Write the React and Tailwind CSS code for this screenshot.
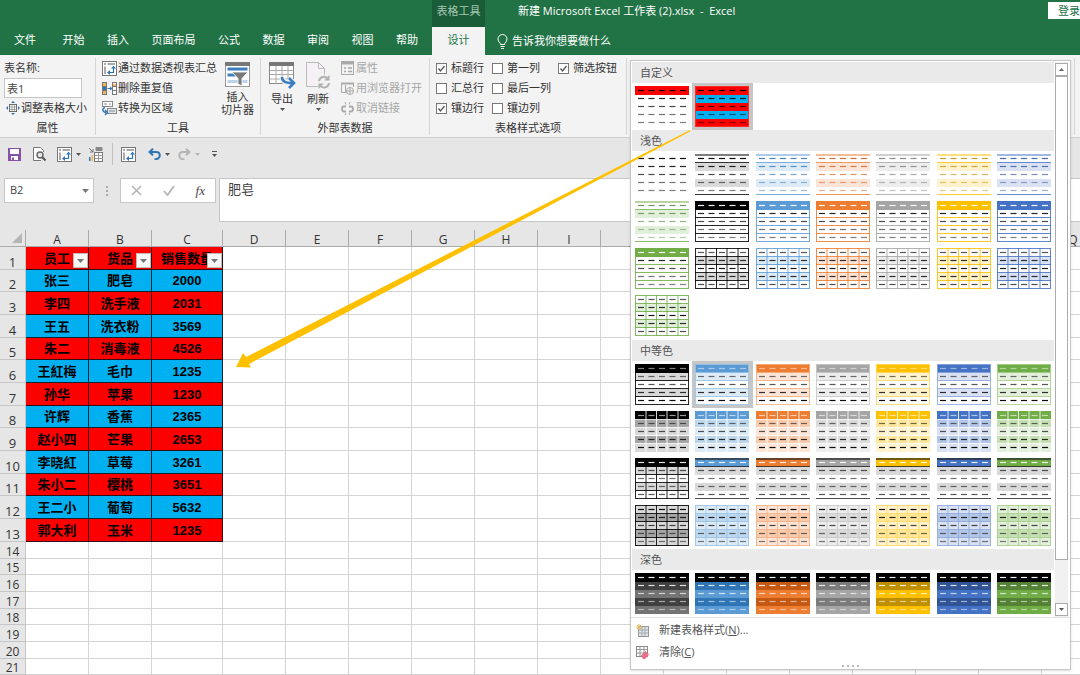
import React, { useState } from 'react';

const columns = ['A', 'B', 'C', 'D', 'E', 'F', 'G', 'H', 'I', 'J', 'K', 'L', 'M', 'N', 'O', 'P', 'Q'];

const records = [
  ['员工', '货品', '销售数量'],
  ['张三', '肥皂', '2000'],
  ['李四', '洗手液', '2031'],
  ['王五', '洗衣粉', '3569'],
  ['朱二', '消毒液', '4526'],
  ['王紅梅', '毛巾', '1235'],
  ['孙华', '苹果', '1230'],
  ['许辉', '香蕉', '2365'],
  ['赵小四', '芒果', '2653'],
  ['李晓紅', '草莓', '3261'],
  ['朱小二', '樱桃', '3651'],
  ['王二小', '葡萄', '5632'],
  ['郭大利', '玉米', '1235'],
];

const emptyRows = [14, 15, 16, 17, 18, 19, 20, 21];

const tabs = ['开始', '插入', '页面布局', '公式', '数据', '审阅', '视图', '帮助'];

// base, tint (20%), mid (40%), line (60%), dark, dash
const themes = {
  black: { base: '#000000', tint: '#d9d9d9', mid: '#a6a6a6', line: '#000000', dark: '#404040', alt: '#737373', dash: '#000000' },
  blue: { base: '#5b9bd5', tint: '#ddebf7', mid: '#bdd7ee', line: '#9bc2e6', dark: '#2f75b5', alt: '#5b9bd5', dash: '#3f7fbb' },
  orange: { base: '#ed7d31', tint: '#fce4d6', mid: '#f8cbad', line: '#f4b084', dark: '#c65911', alt: '#ed7d31', dash: '#d0662a' },
  gray: { base: '#a5a5a5', tint: '#ededed', mid: '#dbdbdb', line: '#c9c9c9', dark: '#7b7b7b', alt: '#a5a5a5', dash: '#858585' },
  gold: { base: '#ffc000', tint: '#fff2cc', mid: '#ffe699', line: '#ffd966', dark: '#bf8f00', alt: '#ffc000', dash: '#c79a1c' },
  indigo: { base: '#4472c4', tint: '#d9e1f2', mid: '#b4c6e7', line: '#8ea9db', dark: '#305496', alt: '#4472c4', dash: '#3c62a8' },
  green: { base: '#70ad47', tint: '#e2efda', mid: '#c6e0b4', line: '#a9d08e', dark: '#548235', alt: '#70ad47', dash: '#6b9150' },
};

const order = ['black', 'blue', 'orange', 'gray', 'gold', 'indigo', 'green'];

const W = '#ffffff';

const variants = {
  plain: () => ({ fills: [W, W, W, W, W], dashes: '#000000', fade: 'down' }),
  customRed: () => ({ fills: ['#ff0000', W, W, W, W], dashes: '#000000', fade: 'down' }),
  customBanded: () => ({ fills: ['#ff0000', '#00b0f0', '#ff0000', '#00b0f0', '#ff0000'], outer: '#ff3030', dashes: '#000000', fade: 'down' }),
  lightLines: (c) => ({ fills: [W, c.tint, W, c.tint, W], rules: c.base, dashes: c.dash, fade: 'down' }),
  lightHeader: (c) => ({ fills: [c.base, W, W, W, W], outer: c.base, rows: c.base, headDash: W, dashes: '#000000', fade: 'down' }),
  lightGrid: (c) => ({ fills: [W, c.tint, W, c.tint, W], outer: c.base, rows: c.base, cols: c.base, dashes: '#000000', fade: 'none' }),
  mediumRows: (c) => ({ fills: [c.base, c.tint, W, c.tint, W], outer: c.line, rows: c.line, headDash: c.tint, dashes: '#000000', fade: 'up' }),
  mediumCells: (c) => ({ fills: [c.base, c.mid, c.tint, c.mid, c.tint], rows: W, cols: W, headDash: W, dashes: '#000000', fade: 'up' }),
  mediumBars: (c) =>
    c.base === '#000000'
      ? { fills: ['#000000', '#d9d9d9', W, '#d9d9d9', W], outer: '#000000', rows: '#000000', cols: '#000000', headDash: W, dashes: '#000000', fade: 'mid' }
      : { fills: [c.base, '#d9d9d9', W, '#d9d9d9', W], rules: '#222222', headDash: W, dashes: '#000000', fade: 'mid' },
  mediumGrid: (c) => ({ fills: [c.tint, c.mid, c.tint, c.mid, c.tint], outer: c.line, rows: c.line, cols: c.line, dashes: '#000000', fade: 'down' }),
  dark: (c) => ({ fills: ['#000000', c.dark, c.alt, c.dark, c.alt], headDash: W, dashes: W, fade: 'down' }),
};

const fades = {
  down: [0.95, 0.85, 0.7, 0.55, 0.5],
  up: [0.6, 0.55, 0.65, 0.8, 0.95],
  mid: [0.9, 0.65, 0.55, 0.55, 0.65],
  none: [0.65, 0.8, 0.9, 0.8, 0.7],
};

const rowY = [0, 9, 17, 25, 33, 41];
const colX = [11, 21.5, 32, 43];
const dashX = [3, 13.5, 24, 34.5, 45];

const Swatch = ({ variant, theme }) => {
  const s = variants[variant](themes[theme] || themes.black);
  return (
    <svg viewBox="0 0 54 41" className="block h-[41px] w-[54px]" aria-hidden="true">
      {s.fills.map((fill, i) => (
        <rect key={i} x="0" y={rowY[i]} width="54" height={rowY[i + 1] - rowY[i]} fill={fill} />
      ))}
      {s.rows && [9, 17, 25, 33].map((y) => <path key={y} d={`M0 ${y - 0.5}H54`} stroke={s.rows} opacity="0.85" />)}
      {s.cols && colX.map((x) => <path key={x} d={`M${x} 0V41`} stroke={s.cols} opacity="0.85" />)}
      {s.rules && (
        <>
          <path d="M0 1H54" stroke={s.rules} strokeWidth="2" opacity={variant === 'lightLines' ? 0.5 : 0.65} />
          <path d="M0 8.5H54M0 40.5H54" stroke={s.rules} opacity="0.8" />
        </>
      )}
      {s.outer && <rect x="0.5" y="0.5" width="53" height="40" fill="none" stroke={s.outer} opacity="0.85" />}
      {dashX.map((x) =>
        rowY.slice(0, 5).map((y, i) => (
          <path
            key={`${x}-${y}`}
            d={`M${x} ${i === 0 ? 4.5 : y + 3.5}h6`}
            stroke={i === 0 && s.headDash ? s.headDash : s.dashes}
            strokeWidth="1.2"
            opacity={fades[s.fade][i]}
          />
        ))
      )}
    </svg>
  );
};

const GallerySection = ({ title, items, selected, onSelect }) => (
  <section>
    <h3 className="h-[21px] bg-[#eaeaea] pl-2 text-[11px] leading-[21px] text-[#555]">{title}</h3>
    <div className="grid grid-cols-7">
      {items.map((item) => (
        <button
          key={item.id}
          type="button"
          aria-label={`${title} ${item.id}`}
          onClick={() => onSelect(item.id)}
          className={
            selected.includes(item.id)
              ? 'flex h-[47px] items-center justify-center bg-[#c6c6c6]'
              : 'flex h-[47px] items-center justify-center'
          }
        >
          <Swatch variant={item.variant} theme={item.theme} />
        </button>
      ))}
    </div>
  </section>
);

const build = (names) => names.flatMap((variant) => order.map((theme) => ({ id: `${variant}-${theme}`, variant, theme })));

const customStyles = [
  { id: 'custom-1', variant: 'customRed' },
  { id: 'custom-2', variant: 'customBanded' },
];
const lightStyles = [{ id: 'none', variant: 'plain' }, ...build(['lightLines', 'lightHeader', 'lightGrid'])];
const mediumStyles = build(['mediumRows', 'mediumCells', 'mediumBars', 'mediumGrid']);
const darkStyles = build(['dark']);

const Caret = ({ className = 'text-[#555]' }) => (
  <svg viewBox="0 0 5 3" className={`h-[3px] w-[5px] shrink-0 ${className}`} aria-hidden="true">
    <path d="M0 0h5L2.5 3z" fill="currentColor" />
  </svg>
);

const PivotIcon = () => (
  <svg viewBox="0 0 15 15" className="h-[15px] w-[15px] shrink-0" fill="none" aria-hidden="true">
    <rect x="0.5" y="0.5" width="14" height="14" fill="#fff" stroke="#777" />
    <path d="M2 3h2M5.5 3H13M3 5.5V13" stroke="#aaa" strokeWidth="2" />
    <path d="M7 11.5h4.5V6.5" stroke="#2e75b6" strokeWidth="1.2" />
    <path d="M9 7.6l2.5-2.8L14 7.6zM8 9l-3 2.5L8 14z" fill="#2e75b6" />
  </svg>
);

const DedupeIcon = () => (
  <svg viewBox="0 0 15 13" className="h-[13px] w-[15px] shrink-0" fill="none" aria-hidden="true">
    <rect x="0.5" y="0.5" width="4" height="12" fill="#f0b35a" stroke="#777" />
    <path d="M1 4.5h3M1 8.5h3" stroke="#777" />
    <rect x="1" y="5" width="3" height="3" fill="#2e75b6" />
    <rect x="10.5" y="0.5" width="4" height="12" fill="#fff" stroke="#777" />
    <path d="M11 2h3v2h-3z" fill="#f0b35a" />
    <path d="M11 4.5h3M11 8.5h3" stroke="#777" />
    <path d="M5.5 6.5h4M8 5l2 1.5L8 8" stroke="#2e75b6" />
  </svg>
);

const RangeIcon = () => (
  <svg viewBox="0 0 15 15" className="h-[15px] w-[15px] shrink-0" fill="none" aria-hidden="true">
    <rect x="0.5" y="0.5" width="10" height="5" fill="#fff" stroke="#888" />
    <path d="M2 3h3M7 3h2" stroke="#888" />
    <rect x="5.5" y="7.5" width="9" height="5" fill="#dce6f2" stroke="#888" />
    <path d="M7 10h6" stroke="#888" />
    <path d="M3 6.5C0 7 0 11 4 11.5M3 9l2.500 2.500L3 14" stroke="#2e75b6" strokeWidth="1.4" />
  </svg>
);

const ResizeIcon = () => (
  <svg viewBox="0 0 14 14" className="h-[14px] w-[14px] shrink-0" fill="none" aria-hidden="true">
    <rect x="3.5" y="3.5" width="7" height="7" fill="#fff" stroke="#666" />
    <path d="M3 6h8M3 8.5h8M6 3v8M8.500 3v8" stroke="#888" strokeWidth="0.7" />
    <path d="M7 0l2 2H5zM7 14l2-2H5zM0 7l2-2v4zM14 7l-2-2v4z" fill="#2e75b6" />
  </svg>
);

const SlicerIcon = () => (
  <svg viewBox="0 0 25 25" className="h-[25px] w-[25px]" fill="none" aria-hidden="true">
    <rect x="0.5" y="0.5" width="24" height="24" fill="#fff" stroke="#999" />
    <path d="M0 0h25v4H0z" fill="#777" />
    <path d="M2.5 7h20M2.5 13h8" stroke="#3d7ebf" strokeWidth="3" />
    <path d="M2.5 19.5h20" stroke="#bcd3ea" strokeWidth="3" />
    <path d="M7 10h16l-6 6.5V24l-4-2v-5.5z" fill="#7a7a7a" stroke="#fff" strokeWidth="0.8" />
  </svg>
);

const ExportIcon = () => (
  <svg viewBox="0 0 27 27" className="h-[27px] w-[27px]" fill="none" aria-hidden="true">
    <rect x="0.5" y="0.5" width="24" height="21" fill="#fff" stroke="#888" />
    <path d="M0 0h25v4H0z" fill="#777" />
    <path d="M1 8.5h23M1 12.5h23M1 17h23M7 4v18M13 4v18M19 4v18" stroke="#aaa" />
    <path d="M13 15c0 5 4 6 11 6M20 16l5 5-5 5" stroke="#f3f3f3" strokeWidth="5" />
    <path d="M13 15c0 5 4 6 11 6M20 16l5 5-5 5" stroke="#3d7ebf" strokeWidth="2.6" />
  </svg>
);

const RefreshIcon = () => (
  <svg viewBox="0 0 25 27" className="h-[27px] w-[25px]" fill="none" aria-hidden="true">
    <path d="M0.5 0.5h12l6 6v18h-18z" fill="#f6f1f6" stroke="#bbb" />
    <path d="M12.5 0.5v6h6" stroke="#bbb" />
    <circle cx="18" cy="20" r="7.5" fill="#f3f3f3" />
    <path d="M13 19a5 5 0 0 1 9-2M23 21a5 5 0 0 1-9 2.5" stroke="#b0b0b0" strokeWidth="2" />
    <path d="M23.5 13v5.5H18zM12.5 27v-5.500H18z" fill="#b0b0b0" />
  </svg>
);

const PropsIcon = () => (
  <svg viewBox="0 0 13 14" className="h-[14px] w-[13px] shrink-0" fill="none" aria-hidden="true">
    <rect x="0.5" y="0.5" width="12" height="13" stroke="#aaa" />
    <path d="M0 2h13" stroke="#aaa" strokeWidth="3" />
    <path d="M3 7h2M7 7h4M3 10.5h2M7 10.5h4" stroke="#aaa" strokeWidth="1.5" />
  </svg>
);

const BrowserIcon = () => (
  <svg viewBox="0 0 13 13" className="h-[13px] w-[13px] shrink-0" fill="none" aria-hidden="true">
    <path d="M6 10.5H0.5V1.5h12V5M4.5 3v7" stroke="#aaa" />
    <path d="M0 1.5h13" stroke="#aaa" strokeWidth="2" />
    <circle cx="9" cy="9" r="3.5" fill="#f3f3f3" stroke="#aaa" />
    <path d="M5.5 9h7M9 5.5v7" stroke="#aaa" />
  </svg>
);

const UnlinkIcon = () => (
  <svg viewBox="0 0 13 13" className="h-[13px] w-[13px] shrink-0" fill="none" aria-hidden="true">
    <path d="M5 4.5H3a2 2.5 0 0 0 0 5h2M8 4.5h2a2 2.5 0 0 1 0 5H8" stroke="#aaa" strokeWidth="1.8" />
    <path d="M4 0l1 2.5M9 0L8 2.5M4 13l1-2M9 13l-1-2" stroke="#aaa" />
  </svg>
);

const BulbIcon = () => (
  <svg viewBox="0 0 11 15" className="h-[15px] w-[11px]" fill="none" stroke="#fff" aria-hidden="true">
    <path d="M3.5 10.5c0-2-2.500-2.500-2.500-5.500a4.500 4.500 0 0 1 9 0c0 3-2.500 3.500-2.500 5.500zM3.500 12.500h4M4 14.500h3" />
  </svg>
);

const SaveIcon = () => (
  <svg viewBox="0 0 13 13" className="h-[13px] w-[13px]" aria-hidden="true">
    <path d="M0 0h13v13H0z" fill="#8a4fa8" />
    <path d="M2 1h9v5H2zM3 8h7v4H3z" fill="#fff" />
    <path d="M4 9.5h2V12H4z" fill="#8a4fa8" />
  </svg>
);

const PreviewIcon = () => (
  <svg viewBox="0 0 13 14" className="h-[14px] w-[13px]" fill="none" aria-hidden="true">
    <path d="M8 13.5H0.5V0.5h7l3 3V5" fill="#fff" stroke="#777" />
    <circle cx="7" cy="8" r="3" fill="#e6e6e6" stroke="#666" strokeWidth="1.4" />
    <path d="M9 10l3.5 3.5" stroke="#555" strokeWidth="2" />
  </svg>
);

const ChartTableIcon = () => (
  <svg viewBox="0 0 15 15" className="h-[15px] w-[15px]" fill="none" aria-hidden="true">
    <path d="M0 1l4 4M4 2v3H1" stroke="#777" />
    <path d="M0 10h1.5v4H0z" fill="#2e75b6" />
    <path d="M2.5 8H4v6H2.5z" fill="#f0b35a" />
    <path d="M7 0.5h6v3H7z" fill="#888" stroke="#888" />
    <rect x="5.5" y="5.5" width="8" height="9" fill="#fff" stroke="#777" />
    <path d="M6 8.5h8M6 11.5h8M9.5 6v8" stroke="#999" />
  </svg>
);

const UndoIcon = ({ className, flip }) => (
  <svg viewBox="0 0 13 12" className={`h-3 w-[13px] ${className}`} fill="none" aria-hidden="true">
    <g transform={flip ? 'matrix(-1 0 0 1 13 0)' : undefined} stroke="currentColor" strokeWidth="2">
      <path d="M5 0.8L1.5 4 5 7.3M1.5 4H8c5 0 5 6.5 0 7.2H6.5" />
    </g>
  </svg>
);

const NewStyleIcon = () => (
  <svg viewBox="0 0 13 13" className="h-[13px] w-[13px] shrink-0" fill="none" aria-hidden="true">
    <rect x="2.5" y="2.5" width="10" height="10" fill="#dce6f2" stroke="#999" />
    <path d="M3 6h9M3 9h9M6 3v9M9 3v9" stroke="#aaa" />
    <path d="M3 0v6M0 3h6M1 1l4 4M5 1L1 5" stroke="#e8b355" />
  </svg>
);

const ClearIcon = () => (
  <svg viewBox="0 0 13 13" className="h-[13px] w-[13px] shrink-0" fill="none" aria-hidden="true">
    <rect x="0.5" y="0.5" width="11" height="10" fill="#fff" stroke="#888" />
    <path d="M1 3.5h10M1 7h10M4 1v9M8 1v9" stroke="#999" />
    <path d="M5 9.5L9.5 5 13 8.5 9 13H7z" fill="#e8708a" />
  </svg>
);

const Group = ({ label, className, children }) => (
  <div className={`flex shrink-0 flex-col border-r border-[#d5d5d5] ${className}`}>
    <div className="flex h-[60px] items-start">{children}</div>
    <div className="mt-auto text-center leading-[14px]">{label}</div>
  </div>
);

const Check = ({ id, label, defaultChecked }) => (
  <div className="flex h-5 items-center gap-1">
    <span className="relative h-[11px] w-[11px]">
      <input
        id={id}
        type="checkbox"
        defaultChecked={defaultChecked}
        className="peer block h-[11px] w-[11px] appearance-none border border-[#777] bg-white"
      />
      <svg viewBox="0 0 11 11" className="pointer-events-none absolute inset-0 hidden h-[11px] w-[11px] peer-checked:block" fill="none" aria-hidden="true">
        <path d="M2.5 5.5l2 2.500 4-5" stroke="#555" strokeWidth="1.3" />
      </svg>
    </span>
    <label htmlFor={id} className="whitespace-nowrap">{label}</label>
  </div>
);

const Header = () => (
  <header className="grid grid-cols-[432px_53px_1fr] grid-rows-[27px_28px] bg-[#217346] text-white">
    <div />
    <div className="bg-[#1b5c38] text-center leading-[21px] text-[#a5c7b3]">表格工具</div>
    <div className="flex items-start justify-between overflow-hidden pl-[33px]">
      <h1 className="leading-[21px] whitespace-pre">新建 Microsoft Excel 工作表 (2).xlsx  -  Excel</h1>
      <button type="button" className="mt-[2px] h-[17px] w-8 shrink-0 bg-white pl-[10px] text-left leading-[17px] whitespace-nowrap text-[#217346]">登录</button>
    </div>
    <nav className="flex items-center justify-between px-[14px] pb-px">
      <a href="#file" className="mr-1">文件</a>
      {tabs.map((tab) => (
        <a key={tab} href={`#${tab}`}>{tab}</a>
      ))}
    </nav>
    <a href="#design" className="flex items-center justify-center bg-[#f3f3f3] pb-px text-[#217346]">设计</a>
    <button type="button" className="flex items-center gap-1 justify-self-start pl-3">
      <BulbIcon />
      告诉我你想要做什么
    </button>
  </header>
);

const Ribbon = () => (
  <div className="flex h-[83px] border-b border-[#cfcfcf] bg-[#f3f3f3] pt-[3px] pb-[2px] text-[#333]">
    <Group label="属性" className="w-24">
      <div className="flex flex-col">
        <label htmlFor="table-name" className="pl-1 leading-5">表名称:</label>
        <input id="table-name" defaultValue="表1" className="ml-1 h-5 w-[78px] border border-[#c6c6c6] bg-white pl-[2px] text-[#444]" />
        <button type="button" className="flex h-5 items-center gap-px pl-[6px] whitespace-nowrap">
          <ResizeIcon />
          调整表格大小
        </button>
      </div>
    </Group>
    <Group label="工具" className="w-[165px]">
      <div className="flex flex-col">
        <button type="button" className="flex h-5 items-center gap-px pl-[6px] whitespace-nowrap"><PivotIcon />通过数据透视表汇总</button>
        <button type="button" className="flex h-5 items-center gap-px pl-[6px] whitespace-nowrap"><DedupeIcon />删除重复值</button>
        <button type="button" className="flex h-5 items-center gap-px pl-[6px] whitespace-nowrap"><RangeIcon />转换为区域</button>
      </div>
      <button type="button" className="flex flex-col items-center pt-1 pl-1 leading-[13px] whitespace-nowrap">
        <SlicerIcon />
        <span className="pt-[3px]">插入<br />切片器</span>
      </button>
    </Group>
    <Group label="外部表数据" className="w-[169px]">
      <button type="button" className="flex w-[38px] flex-col items-center gap-[3px] pt-1 pl-1 leading-[13px] whitespace-nowrap">
        <ExportIcon />
        导出
        <Caret />
      </button>
      <button type="button" className="flex w-[38px] flex-col items-center gap-[3px] pt-1 leading-[13px] whitespace-nowrap">
        <RefreshIcon />
        刷新
        <Caret />
      </button>
      <div className="flex flex-col pl-1 text-[#a6a6a6]">
        <button type="button" disabled className="flex h-5 items-center gap-[2px] whitespace-nowrap"><PropsIcon />属性</button>
        <button type="button" disabled className="flex h-5 items-center gap-[2px] whitespace-nowrap"><BrowserIcon />用浏览器打开</button>
        <button type="button" disabled className="flex h-5 items-center gap-[2px] whitespace-nowrap"><UnlinkIcon />取消链接</button>
      </div>
    </Group>
    <Group label="表格样式选项" className="w-[197px]">
      <div className="grid grid-cols-[56px_66px_1fr] pl-[6px]">
        <Check id="header-row" label="标题行" defaultChecked />
        <Check id="first-col" label="第一列" />
        <Check id="filter-button" label="筛选按钮" defaultChecked />
        <Check id="total-row" label="汇总行" />
        <Check id="last-col" label="最后一列" />
        <span />
        <Check id="banded-rows" label="镶边行" defaultChecked />
        <Check id="banded-cols" label="镶边列" />
      </div>
    </Group>
    <div className="mr-[5px] flex-1 border-r border-[#d5d5d5]" />
  </div>
);

const QuickAccess = () => (
  <div className="flex h-8 items-center pl-2 text-[#555]">
    <button type="button" aria-label="保存" className="mr-3"><SaveIcon /></button>
    <button type="button" aria-label="打印预览" className="mr-[11px]"><PreviewIcon /></button>
    <button type="button" aria-label="数据透视表" className="mr-2 flex items-center gap-1"><PivotIcon /><Caret /></button>
    <button type="button" aria-label="图表" className="mr-2"><ChartTableIcon /></button>
    <div className="mr-2 h-[22px] w-px bg-[#c0c0c0]" />
    <button type="button" aria-label="汇总" className="mr-3"><PivotIcon /></button>
    <button type="button" aria-label="撤销" className="mr-2 flex items-center gap-1"><UndoIcon className="text-[#2e75b6]" /><Caret /></button>
    <button type="button" aria-label="恢复" className="mr-3 flex items-center gap-1"><UndoIcon className="text-[#b5b5b5]" flip /><Caret className="text-[#b5b5b5]" /></button>
    <button type="button" aria-label="自定义快速访问工具栏" className="flex flex-col items-center gap-[2px]">
      <span className="h-px w-[5px] bg-[#555]" />
      <Caret />
    </button>
  </div>
);

const FormulaBar = () => (
  <div className="flex h-[60px] items-start pt-2 pl-1 text-[#444]">
    <div className="flex h-[25px] w-[90px] items-center border border-[#c6c6c6] bg-white pr-1">
      <input aria-label="名称框" defaultValue="B2" className="w-full min-w-0 bg-transparent pl-[5px]" />
      <button type="button" aria-label="名称列表"><svg viewBox="0 0 7 4" className="h-1 w-[7px]"><path d="M0 0h7L3.5 4z" fill="#777" /></svg></button>
    </div>
    <div className="flex h-[25px] w-[26px] flex-col items-center justify-center gap-[2px]">
      <span className="h-[2px] w-[2px] bg-[#aaa]" />
      <span className="h-[2px] w-[2px] bg-[#aaa]" />
      <span className="h-[2px] w-[2px] bg-[#aaa]" />
    </div>
    <div className="flex h-[25px] w-24 items-center justify-between border border-[#c6c6c6] bg-white px-[10px]">
      <button type="button" aria-label="取消"><svg viewBox="0 0 11 11" className="h-[11px] w-[11px]"><path d="M1 1l9 9M10 1l-9 9" stroke="#b5b5b5" strokeWidth="1.6" /></svg></button>
      <button type="button" aria-label="输入"><svg viewBox="0 0 12 11" className="h-[11px] w-3" fill="none"><path d="M1 6l3.5 4L11 1" stroke="#b5b5b5" strokeWidth="1.8" /></svg></button>
      <button type="button" className="font-['Liberation_Serif',serif] text-[13px] italic">fx</button>
    </div>
    <input aria-label="编辑栏" defaultValue="肥皂" className="ml-[3px] h-11 min-w-0 flex-1 border border-r-0 border-[#c6c6c6] bg-white pb-6 pl-2 text-[13px]" />
  </div>
);

const Sheet = () => (
  <div className="min-h-0 flex-1 overflow-hidden bg-white">
    <table className="w-[1105px] table-fixed border-separate border-spacing-0 text-[13px] leading-none text-[#333]">
      <colgroup>
        <col className="w-[26px]" />
        {columns.map((c) => (
          <col key={c} className={c === 'C' ? 'w-[71px]' : 'w-[63px]'} />
        ))}
      </colgroup>
      <thead>
        <tr className="h-[17px] bg-[#e6e6e6] text-[12px]">
          <th className="border-r border-b border-[#ababab] p-0 align-bottom">
            <svg viewBox="0 0 10 10" className="mb-[3px] ml-3 h-[10px] w-[10px]"><path d="M10 0v10H0z" fill="#b5b5b5" /></svg>
          </th>
          {columns.map((c) => (
            <th key={c} className="border-r border-b border-[#ababab] p-0 align-bottom font-normal">{c}</th>
          ))}
        </tr>
      </thead>
      <tbody>
        {records.map((cells, i) => (
          <tr key={i} className={i % 3 === 1 ? 'h-[22px]' : 'h-[23px]'}>
            <th className="border-r border-b border-[#c6c6c6] bg-[#e6e6e6] p-0 align-bottom font-normal">{i + 1}</th>
            {cells.map((value, j) => (
              <td
                key={j}
                className={
                  i % 2 === 0
                    ? "relative border-r border-b border-[#301010] bg-[#ff0000] p-0 text-center font-['Liberation_Sans','Noto_Sans_CJK_SC',sans-serif] font-bold whitespace-nowrap text-black"
                    : "relative border-r border-b border-[#102530] bg-[#00b0f0] p-0 text-center font-['Liberation_Sans','Noto_Sans_CJK_SC',sans-serif] font-bold whitespace-nowrap text-black"
                }
              >
                {value}
                {i === 0 && (
                  <button type="button" aria-label={`筛选${value}`} className="absolute right-0 bottom-px flex h-[15px] w-[15px] items-center justify-center border border-[#bbb] bg-[#f7f7f7]">
                    <svg viewBox="0 0 7 4" className="h-1 w-[7px]"><path d="M0 0h7L3.5 4z" fill="#777" /></svg>
                  </button>
                )}
              </td>
            ))}
            {columns.slice(3).map((c) => (
              <td key={c} className="border-r border-b border-[#d4d4d4] p-0" />
            ))}
          </tr>
        ))}
        {emptyRows.map((n) => (
          <tr key={n} className={n % 3 === 0 ? 'h-4' : 'h-[17px]'}>
            <th className="border-r border-b border-[#c6c6c6] bg-[#e6e6e6] p-0 align-bottom text-[12px] font-normal">{n}</th>
            {columns.map((c) => (
              <td key={c} className="border-r border-b border-[#d4d4d4] p-0" />
            ))}
          </tr>
        ))}
      </tbody>
    </table>
  </div>
);

const StyleMenu = () => {
  const [custom, setCustom] = useState('custom-2');
  const [current, setCurrent] = useState('mediumRows-blue');
  const selected = [custom, current];

  return (
    <div className="absolute top-[60px] left-[630px] w-[441px] border border-[#c6c6c6] bg-white text-[#555] shadow-sm">
      <div className="flex border-b border-[#e1e1e1] pt-px pl-px">
        <div className="w-[422px]">
          <GallerySection title="自定义" items={customStyles} selected={selected} onSelect={setCustom} />
          <GallerySection title="浅色" items={lightStyles} selected={selected} onSelect={setCurrent} />
          <div className="pt-px">
            <GallerySection title="中等色" items={mediumStyles} selected={selected} onSelect={setCurrent} />
          </div>
          <GallerySection title="深色" items={darkStyles} selected={selected} onSelect={setCurrent} />
        </div>
        <div className="ml-px flex w-[13px] flex-col bg-[#f0f0f0] pt-px pb-px">
          <button type="button" aria-label="向上滚动" className="flex h-[13px] items-center justify-center border border-[#ababab] bg-white">
            <Caret className="rotate-180 text-[#666]" />
          </button>
          <div className="h-[484px] border border-[#ababab] bg-white" />
          <button type="button" aria-label="向下滚动" className="mt-auto flex h-[13px] items-center justify-center border border-[#ababab] bg-white">
            <Caret className="text-[#555]" />
          </button>
        </div>
      </div>
      <button type="button" className="flex h-6 w-full items-center gap-[10px] pl-[5px]">
        <NewStyleIcon />
        <span>新建表格样式(<u>N</u>)...</span>
      </button>
      <button type="button" className="flex h-5 w-full items-center gap-[10px] pl-[5px]">
        <ClearIcon />
        <span>清除(<u>C</u>)</span>
      </button>
      <div className="flex h-[7px] items-center justify-center gap-[3px]">
        <span className="h-[2px] w-[2px] bg-[#b5bcc8]" />
        <span className="h-[2px] w-[2px] bg-[#b5bcc8]" />
        <span className="h-[2px] w-[2px] bg-[#b5bcc8]" />
        <span className="h-[2px] w-[2px] bg-[#b5bcc8]" />
      </div>
    </div>
  );
};

const App = () => {
  return (
    <div className="relative flex h-screen flex-col overflow-hidden bg-[#e6e6e6] font-['Open_Sans','Noto_Sans_CJK_SC',sans-serif] text-[11px]">
      <Header />
      <Ribbon />
      <QuickAccess />
      <FormulaBar />
      <Sheet />
      <StyleMenu />
      {/* arrow from the chosen style to the table */}
      <svg viewBox="0 0 456 240" className="pointer-events-none absolute top-[130px] left-[235px] h-[240px] w-[456px]" aria-hidden="true">
        <path d="M1 237L8 223l3 4L455 0l0.5 1.2L14 234l2 3.5z" fill="#ffc000" />
      </svg>
    </div>
  );
};

export default App;
